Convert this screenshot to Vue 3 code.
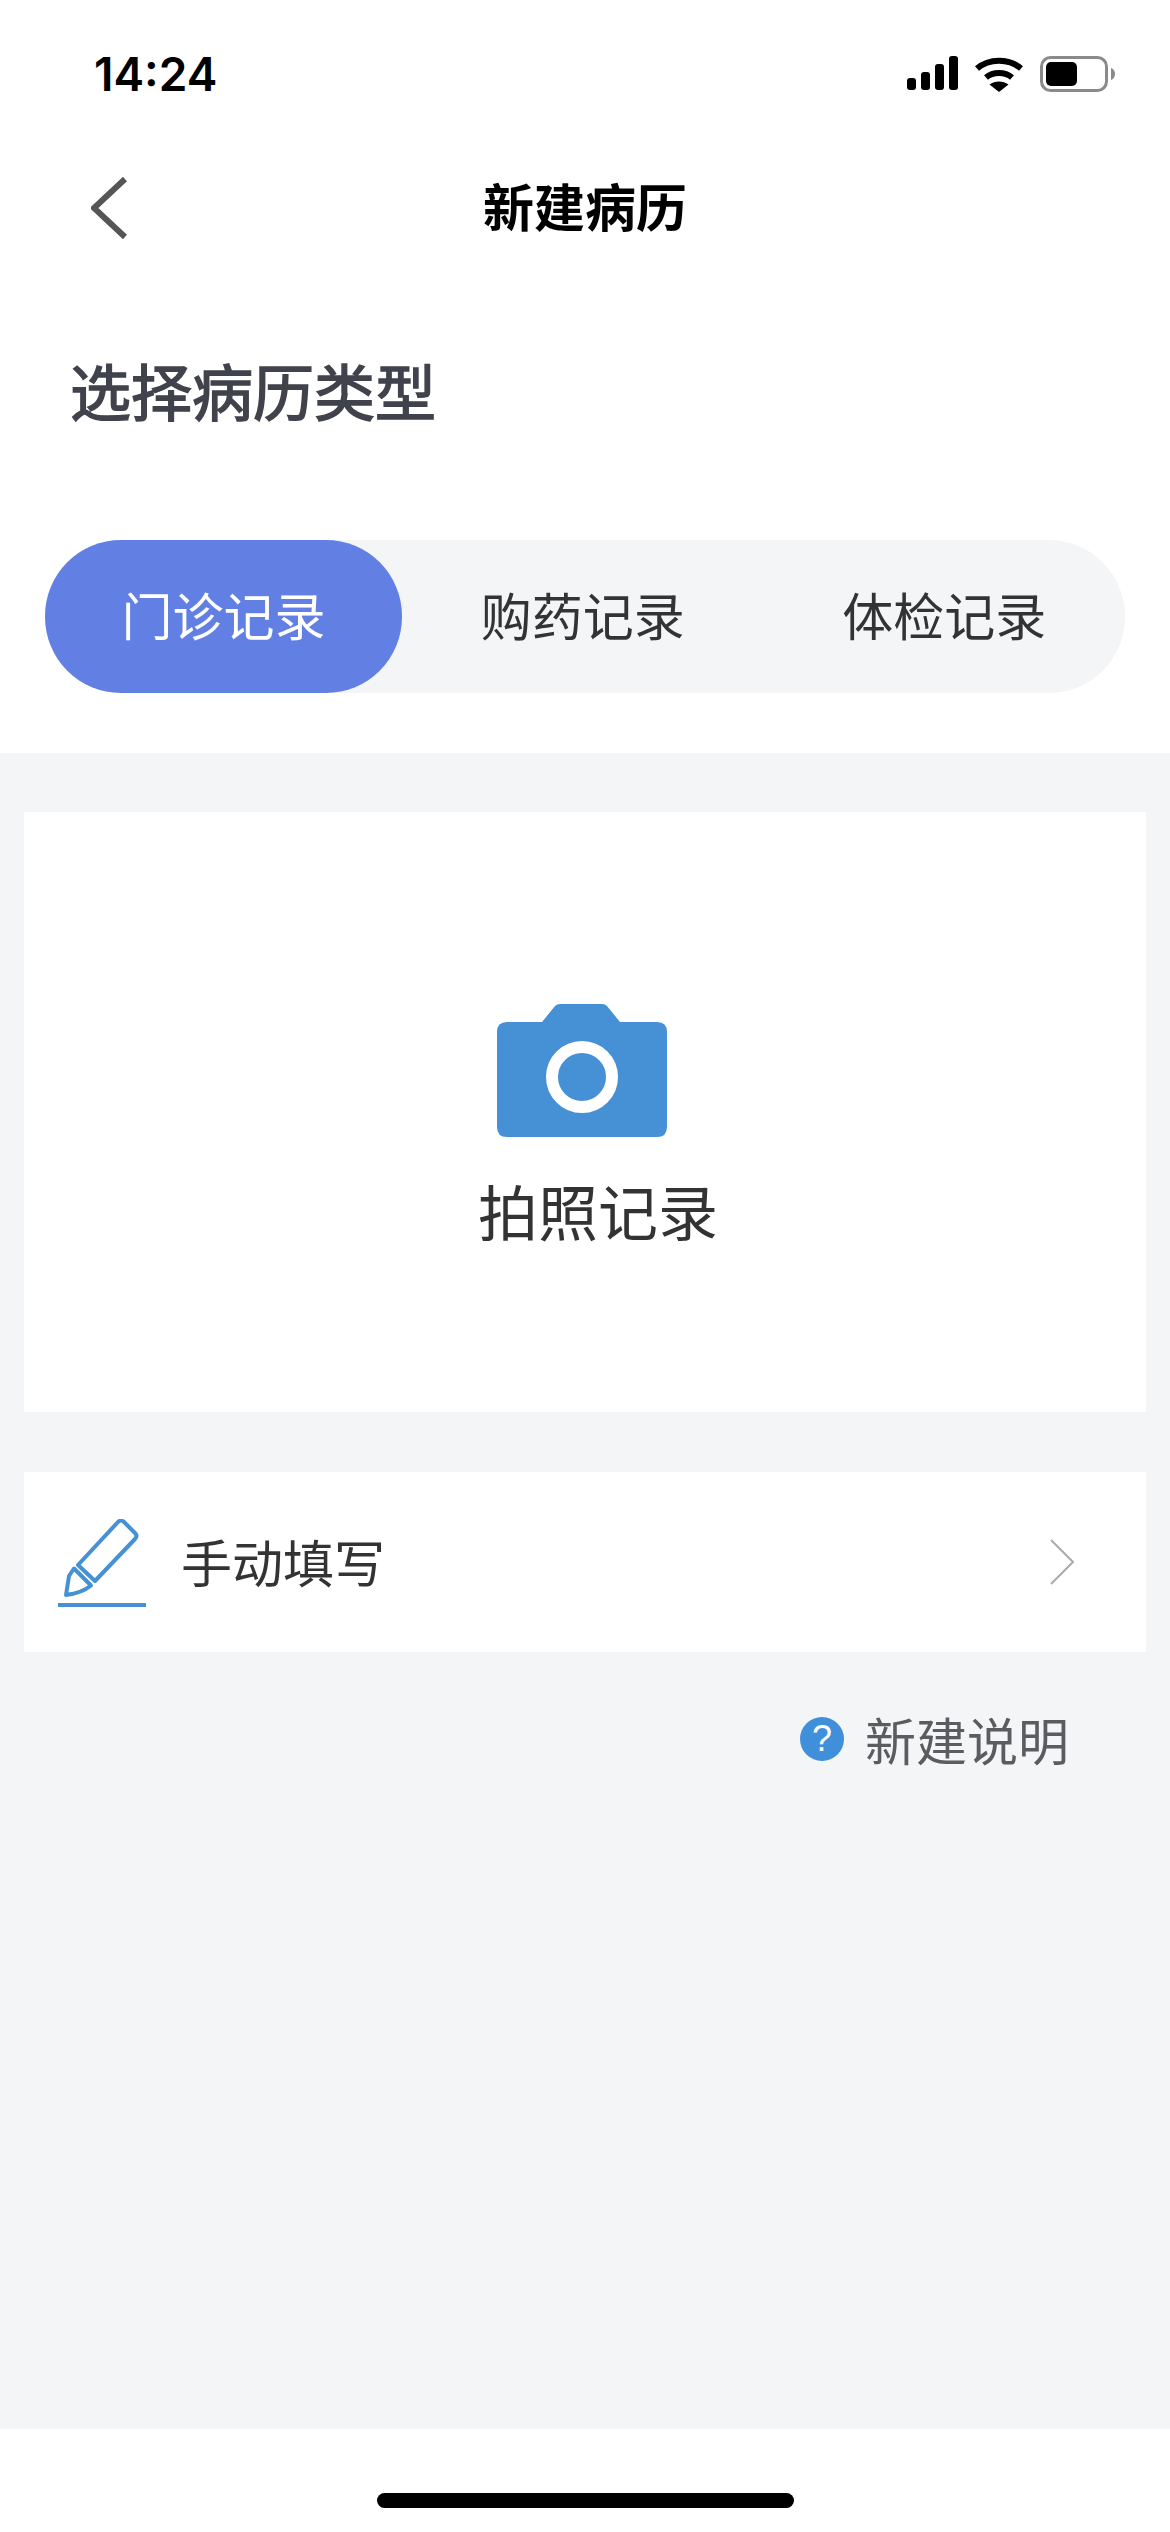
<template>
  <div class="page">
    <div class="head">
      <div class="status">
        <span class="time">14:24</span>
        <div class="status-icons">
          <svg width="51" height="36" viewBox="0 0 51 36">
            <rect x="0" y="22" width="9" height="12" rx="3" />
            <rect x="14" y="16" width="9" height="18" rx="3" />
            <rect x="28" y="8" width="9" height="26" rx="3" />
            <rect x="42" y="0" width="9" height="34" rx="3" />
          </svg>
          <svg width="48" height="36" viewBox="0 0 48 36">
            <path d="M2 12.5C14 2 34 2 46 12.5" fill="none" stroke="#000" stroke-width="6" />
            <path d="M11 21.5C18 15.5 30 15.5 37 21.5" fill="none" stroke="#000" stroke-width="6" />
            <path d="M24 36L14.500 28.500C20 24.500 28 24.500 33.500 28.500Z" />
          </svg>
          <svg width="75" height="36" viewBox="0 0 75 36">
            <rect x="1.500" y="1.500" width="65" height="33" rx="9" fill="none" stroke="#8a8a8a" stroke-width="3" />
            <rect x="6" y="6" width="31" height="24" rx="5" />
            <path d="M71 12C74 13 75 15.500 75 18C75 20.500 74 23 71 24Z" fill="#8a8a8a" />
          </svg>
        </div>
      </div>
      <div class="nav">
        <svg class="back" width="36" height="62" viewBox="0 0 36 62">
          <path d="M34 2L3 31L34 60" fill="none" stroke="#555" stroke-width="6" />
        </svg>
        <span class="nav-title">新建病历</span>
      </div>
      <div class="heading">选择病历类型</div>
      <div class="tabs">
        <div v-for="(tab, index) in tabs" :key="tab" class="tab" :class="{ active: index === current }">{{ tab }}</div>
      </div>
    </div>

    <div class="main">
      <div class="photo-card">
        <svg class="camera" width="170" height="133" viewBox="0 0 170 133">
          <path d="M45 18L58 2Q60 0 63 0H105Q108 0 110 2L123 18H160Q170 18 170 28V123Q170 133 160 133H10Q0 133 0 123V28Q0 18 10 18Z" fill="#4690d6" />
          <circle cx="85" cy="73" r="30" fill="none" stroke="#fff" stroke-width="12" />
        </svg>
        <div class="photo-label">拍照记录</div>
      </div>

      <div class="manual-row">
        <svg class="pencil" width="90" height="90" viewBox="0 0 90 90">
          <g fill="none" stroke="#4690d6" stroke-width="4" stroke-linejoin="round">
            <path d="M20 46L60 3Q63 0 66 3L77 14Q80 17 77 20L37 62Z" />
            <path d="M16 49.500L11 57L8 76Q24 74 33 66.500Z" />
          </g>
          <rect x="0" y="84" width="88" height="4" fill="#4690d6" />
        </svg>
        <span class="manual-text">手动填写</span>
        <svg class="arrow" width="24" height="46" viewBox="0 0 24 46">
          <path d="M1 1L23 23L1 45" fill="none" stroke="#aaa" stroke-width="2" />
        </svg>
      </div>

      <div class="help">
        <span class="help-icon">?</span>
        <span class="help-text">新建说明</span>
      </div>
    </div>

    <div class="bottom">
      <div class="home-bar"></div>
    </div>
  </div>
</template>

<script setup>
import { ref } from 'vue';

const tabs = ['门诊记录', '购药记录', '体检记录'];
const current = ref(0);
</script>

<style scoped>
.page {
  width: 1170px;
  height: 2532px;
  display: flex;
  flex-direction: column;
  background: #f4f5f7;
  font-family: "Noto Sans CJK SC", "Noto Sans", sans-serif;
  overflow: hidden;
}

.head {
  background: #fff;
  height: 753px;
}

.status {
  height: 148px;
  padding: 0 55px 0 94px;
  display: flex;
  justify-content: space-between;
  align-items: center;
}

.time {
  font-family: Inter, "Liberation Sans", sans-serif;
  font-size: 46px;
  font-weight: 600;
  color: #000;
}

.status-icons {
  display: flex;
  align-items: center;
  gap: 17px;
}

.nav {
  height: 120px;
  padding: 0 91px;
  display: grid;
  grid-template-columns: 1fr auto 1fr;
  align-items: center;
}

.back {
  display: block;
}

.nav-title {
  font-size: 51px;
  font-weight: 700;
  line-height: 60px;
  color: #000;
  padding-bottom: 6px;
}

.heading {
  margin-top: 92px;
  padding-left: 70px;
  font-size: 61px;
  line-height: 60px;
  color: #40424c;
  -webkit-text-stroke: 1.5px #40424c;
}

.tabs {
  margin: 120px 45px 0;
  height: 153px;
  display: grid;
  grid-template-columns: 357px 1fr 1fr;
  background: #f4f5f7;
  border-radius: 76px;
}

.tab {
  display: flex;
  align-items: center;
  justify-content: center;
  padding-bottom: 6px;
  box-sizing: border-box;
  font-size: 51px;
  color: #333;
  border-radius: 76px;
}

.tab.active {
  background: #6280e4;
  color: #fff;
}

.main {
  flex: 1;
  padding: 59px 24px 0;
}

.photo-card {
  height: 600px;
  background: #fff;
  padding-top: 192px;
  box-sizing: border-box;
  display: flex;
  flex-direction: column;
  align-items: center;
}

.camera {
  margin-left: -6px;
}

.photo-label {
  margin-top: 31px;
  margin-left: 26px;
  font-size: 60px;
  line-height: 84px;
  color: #333;
}

.manual-row {
  margin-top: 60px;
  height: 180px;
  background: #fff;
  padding: 0 72px 0 34px;
  display: flex;
  align-items: center;
}

.pencil {
  margin-top: 4px;
}

.manual-text {
  margin-left: 33px;
  padding-bottom: 3px;
  font-size: 51px;
  color: #333;
  flex: 1;
}

.help {
  margin-top: 55px;
  padding-right: 77px;
  display: flex;
  justify-content: flex-end;
  align-items: center;
  gap: 21px;
}

.help-icon {
  width: 44px;
  height: 44px;
  border-radius: 50%;
  background: #3f8fdb;
  color: #fff;
  font-family: "Liberation Sans", sans-serif;
  font-size: 36px;
  line-height: 44px;
  text-align: center;
}

.help-text {
  font-size: 51px;
  line-height: 64px;
  color: #5a5c60;
}

.bottom {
  height: 103px;
  background: #fff;
  padding-top: 64px;
  box-sizing: border-box;
}

.home-bar {
  width: 417px;
  height: 15px;
  margin: 0 auto;
  background: #000;
  border-radius: 8px;
}
</style>
